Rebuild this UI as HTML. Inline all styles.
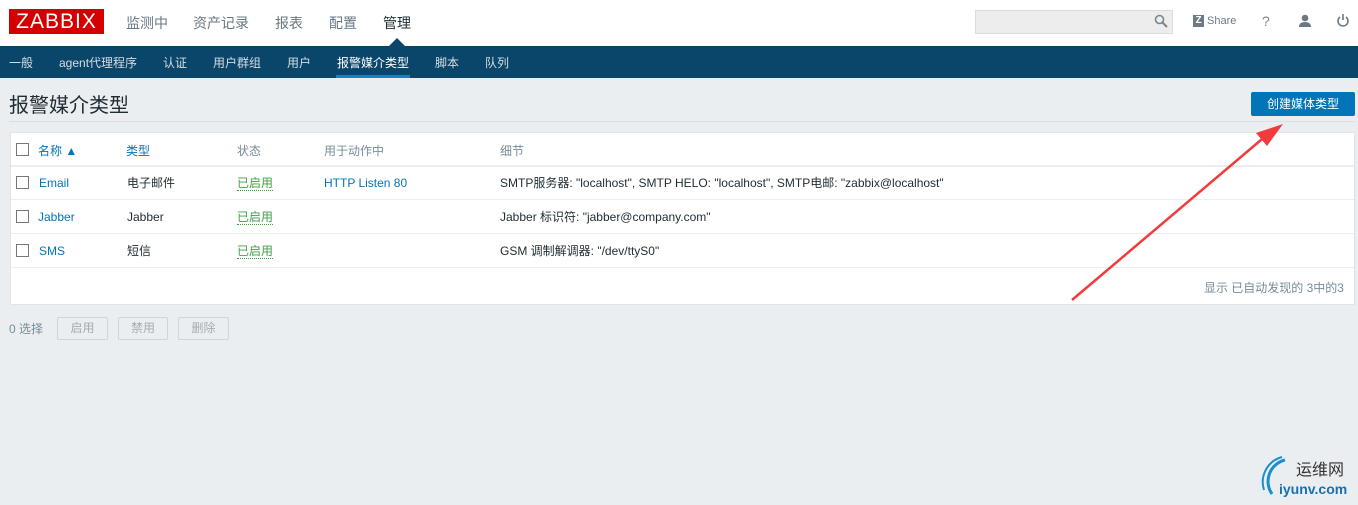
<!DOCTYPE html>
<html><head><meta charset="utf-8"><style>
*{margin:0;padding:0;box-sizing:border-box}
body{width:1358px;height:505px;background:#ebeef0;font-family:"Liberation Sans","Noto Sans CJK SC",sans-serif;font-size:12px;color:#1f2c33;position:relative;overflow:hidden}
.top{position:absolute;left:0;top:0;width:1358px;height:46px;background:#fff}
.logo{position:absolute;left:9px;top:9px;width:95px;height:25px;background:#d40000;color:#fff;font-size:21px;line-height:25px;text-align:center;letter-spacing:1px}
.mm{position:absolute;top:15px;font-size:14px;line-height:16px;color:#687883}
.sub{position:absolute;left:0;top:46px;width:1358px;height:32px;background:#0a466a}
.si{position:absolute;top:10px;font-size:12px;line-height:14px;color:#d5dde3}
.abs{position:absolute}
.tbl{position:absolute;left:10px;top:132px;width:1345px;height:173px;background:#fff;border:1px solid #dfe4e7}
.hl{position:absolute;left:0;width:1343px;height:2px;background:#ebeef0}
.cb{position:absolute;left:5px;width:13px;height:13px;border:1px solid #777;background:#fff}
.t{position:absolute;font-size:12px;line-height:14px;white-space:nowrap}
.lnk{color:#0275b8}
.gr{color:#429e47;border-bottom:1px dotted #429e47}
.btn{position:absolute;top:317px;height:23px;border:1px solid #cfd6db;border-radius:2px;color:#a3adb4;font-size:12px;text-align:center;line-height:21px;background:#ebeef0}
</style></head><body>
<div class="top">
<div class="logo">ZABBIX</div>
<div class="mm" style="left:126px">监测中</div>
<div class="mm" style="left:193px">资产记录</div>
<div class="mm" style="left:275px">报表</div>
<div class="mm" style="left:329px">配置</div>
<div class="mm" style="left:383px;color:#1f2c33">管理</div>
<div class="abs" style="left:975px;top:10px;width:198px;height:24px;background:#ededed;border:1px solid #dcdcdc"></div>
<svg class="abs" style="left:1154px;top:14px" width="14" height="14" viewBox="0 0 14 14"><circle cx="5.5" cy="5.5" r="4" fill="none" stroke="#7a858c" stroke-width="1.6"/><path d="M8.5 8.5L13 13" stroke="#7a858c" stroke-width="2"/></svg>
<div class="abs" style="left:1193px;top:15px;width:11px;height:12px;background:#6b7a84;color:#fff;font-size:10px;font-weight:bold;line-height:12px;text-align:center">Z</div>
<div class="abs" style="left:1207px;top:15px;font-size:11px;line-height:13px;color:#6b7a84">Share</div>
<div class="abs" style="left:1262px;top:13px;font-size:14px;line-height:16px;color:#7a858c">?</div>
<svg class="abs" style="left:1298px;top:14px" width="14" height="14" viewBox="0 0 14 14"><circle cx="7" cy="4" r="3.3" fill="#6b7a84"/><path d="M1 13 Q1 8 7 8 Q13 8 13 13Z" fill="#6b7a84"/></svg>
<svg class="abs" style="left:1336px;top:13px" width="14" height="14" viewBox="0 0 14 14"><path d="M4 4 A5 5 0 1 0 10 4" fill="none" stroke="#6b7a84" stroke-width="1.6"/><path d="M7 1V7" stroke="#6b7a84" stroke-width="1.6"/></svg>
</div>
<svg class="abs" style="left:388px;top:38px" width="18" height="9"><path d="M0 9L9 0L18 9Z" fill="#0a466a"/></svg>
<div class="sub">
<div class="si" style="left:9px">一般</div>
<div class="si" style="left:59px">agent代理程序</div>
<div class="si" style="left:163px">认证</div>
<div class="si" style="left:213px">用户群组</div>
<div class="si" style="left:287px">用户</div>
<div class="si" style="left:337px;color:#fff">报警媒介类型</div>
<div class="abs" style="left:336px;top:29px;width:74px;height:3px;background:#0f84cb"></div>
<div class="si" style="left:435px">脚本</div>
<div class="si" style="left:485px">队列</div>
</div>
<div class="abs" style="left:9px;top:94px;font-size:20px;line-height:24px;color:#1f2c33">报警媒介类型</div>
<div class="abs" style="left:9px;top:121px;width:1346px;height:1px;background:#dcdfe1"></div>
<div class="abs" style="left:1251px;top:92px;width:104px;height:24px;background:#0275b8;border-radius:2px;color:#fff;font-size:12px;line-height:24px;text-align:center">创建媒体类型</div>
<div class="tbl">
<div class="cb" style="top:10px"></div>
<div class="t lnk" style="left:27px;top:11px">名称 ▲</div>
<div class="t lnk" style="left:115px;top:11px">类型</div>
<div class="t" style="left:226px;top:11px;color:#768d99">状态</div>
<div class="t" style="left:313px;top:11px;color:#768d99">用于动作中</div>
<div class="t" style="left:489px;top:11px;color:#768d99">细节</div>
<div class="hl" style="top:32px"></div>
<div class="cb" style="top:43px"></div>
<div class="t lnk" style="left:28px;top:43px">Email</div>
<div class="t" style="left:116px;top:43px">电子邮件</div>
<div class="t gr" style="left:226px;top:43px">已启用</div>
<div class="t lnk" style="left:313px;top:43px">HTTP Listen 80</div>
<div class="t" style="left:489px;top:43px">SMTP服务器: "localhost", SMTP HELO: "localhost", SMTP电邮: "zabbix@localhost"</div>
<div class="hl" style="top:66px;height:1px"></div>
<div class="cb" style="top:77px"></div>
<div class="t lnk" style="left:27px;top:77px">Jabber</div>
<div class="t" style="left:116px;top:77px">Jabber</div>
<div class="t gr" style="left:226px;top:77px">已启用</div>
<div class="t" style="left:489px;top:77px">Jabber 标识符: "jabber@company.com"</div>
<div class="hl" style="top:100px;height:1px"></div>
<div class="cb" style="top:111px"></div>
<div class="t lnk" style="left:28px;top:111px">SMS</div>
<div class="t" style="left:116px;top:111px">短信</div>
<div class="t gr" style="left:226px;top:111px">已启用</div>
<div class="t" style="left:489px;top:111px">GSM 调制解调器: "/dev/ttyS0"</div>
<div class="hl" style="top:134px;height:1px"></div>
<div class="t" style="right:10px;top:148px;color:#768d99">显示 已自动发现的 3中的3</div>
</div>
<div class="abs" style="left:9px;top:322px;line-height:14px;color:#768d99">0 选择</div>
<div class="btn" style="left:57px;width:51px">启用</div>
<div class="btn" style="left:118px;width:50px">禁用</div>
<div class="btn" style="left:178px;width:51px">删除</div>
<svg class="abs" style="left:0;top:0" width="1358" height="505"><path d="M1072 300L1268 134" stroke="#f03c3c" stroke-width="2.5"/><path d="M1283 124L1256 133L1267 146Z" fill="#f03c3c"/>
<path d="M1272 494 A22 22 0 0 1 1285 460" fill="none" stroke="#1a8fd0" stroke-width="3"/><path d="M1264 490 A26 26 0 0 1 1282 457" fill="none" stroke="#1a8fd0" stroke-width="2"/></svg>
<div class="abs" style="left:1296px;top:462px;font-size:16px;line-height:18px;color:#333">运维网</div>
<div class="abs" style="left:1279px;top:481px;font-size:14px;line-height:16px;font-weight:bold;color:#1a6fb0">iyunv.com</div>
</body></html>
